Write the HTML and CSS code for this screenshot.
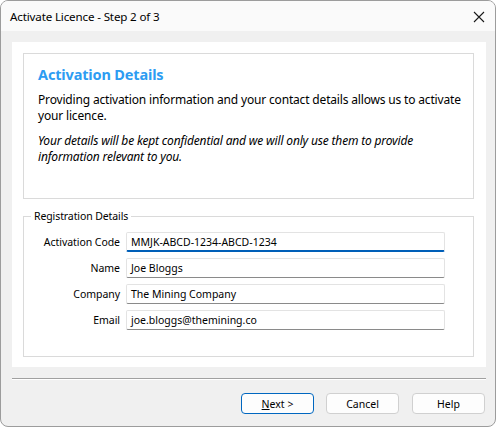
FILE: index.html
```html
<!DOCTYPE html>
<html>
<head>
<meta charset="utf-8">
<link rel="stylesheet" href="styles.css">
</head>
<body>
<div class="window">
  <div class="titlebar">
    <span class="title">Activate Licence - Step 2 of 3</span>
    <svg class="close" width="12" height="12" viewBox="0 0 12 12"><path d="M1 1 L11 11 M11 1 L1 11" stroke="#1a1a1a" stroke-width="1.1" fill="none"/></svg>
  </div>
  <div class="body">
    <div class="panel">
      <div class="intro">
        <h1 class="heading">Activation Details</h1>
        <p class="text">Providing activation information and your contact details allows us to activate your licence.</p>
        <p class="text italic">Your details will be kept confidential and we will only use them to provide information relevant to you.</p>
      </div>
      <fieldset class="group">
        <legend class="legend">Registration Details</legend>
        <div class="row">
          <label class="label">Activation Code</label>
          <div class="input focused">MMJK-ABCD-1234-ABCD-1234</div>
        </div>
        <div class="row">
          <label class="label">Name</label>
          <div class="input">Joe Bloggs</div>
        </div>
        <div class="row">
          <label class="label">Company</label>
          <div class="input">The Mining Company</div>
        </div>
        <div class="row row-last">
          <label class="label">Email</label>
          <div class="input">joe.bloggs@themining.co</div>
        </div>
      </fieldset>
    </div>
    <div class="separator"></div>
    <div class="buttons">
      <button class="btn default"><u>N</u>ext &gt;</button>
      <button class="btn">Cancel</button>
      <button class="btn btn-help">Help</button>
    </div>
  </div>
</div>
</body>
</html>
```

FILE: styles.css
```css
html, body {
  margin: 0;
  padding: 0;
  background: #ffffff;
}
body {
  font-family: "Noto Sans", "Open Sans", sans-serif;
  font-size: 12px;
  color: #000;
}
.window {
  width: 496px;
  height: 427px;
  box-sizing: border-box;
  border: 1px solid #9c9c9c;
  border-radius: 8px;
  overflow: hidden;
  background: #f0f0f0;
  display: flex;
  flex-direction: column;
}
.titlebar {
  height: 30px;
  background: #fafafa;
  display: flex;
  align-items: center;
  justify-content: space-between;
  padding: 0 9px 0 9px;
  flex-shrink: 0;
}
.title {
  font-size: 11.6px;
  color: #000;
  letter-spacing: -0.15px;
}
.close {
  margin-right: 1px;
  margin-top: 1px;
}
.body {
  display: flex;
  flex-direction: column;
  padding: 11px 9px 0 11px;
  flex: 1;
}
.panel {
  background: #fff;
  height: 325px;
  box-sizing: border-box;
  padding: 11px 12px 0 11px;
}
.intro {
  border: 1px solid #dadada;
  height: 146px;
  box-sizing: border-box;
  padding: 10px 8px 0 14px;
}
.heading {
  margin: 0;
  font-size: 14.5px;
  font-weight: bold;
  color: #2d9cf2;
  line-height: 20px;
  letter-spacing: -0.15px;
}
.text {
  margin: 8px 0 0 0;
  line-height: 16px;
  letter-spacing: -0.17px;
}
.text.italic {
  font-style: italic;
  margin-top: 9px;
  padding-right: 6px;
}
.group {
  margin: 10px 0 0 0;
  border: 1px solid #dadada;
  height: 148px;
  box-sizing: border-box;
  padding: 9px 28px 0 0;
  font-size: 10.5px;
}
.legend {
  padding: 0 3px;
  margin-left: 7px;
  letter-spacing: -0.1px;
  font-size: 10.5px;
}
.row {
  display: flex;
  align-items: center;
  height: 20px;
  margin-bottom: 6px;
}
.row-last {
  margin-top: 3px;
}
.label {
  width: 96px;
  text-align: right;
  padding-right: 6px;
  letter-spacing: -0.05px;
}
.input {
  flex: 1;
  height: 20px;
  box-sizing: border-box;
  border: 1px solid #e3e3e3;
  border-bottom: 1px solid #8a8a8a;
  border-radius: 2px;
  background: #fff;
  padding: 0 4px;
  line-height: 18px;
  letter-spacing: 0;
}
.input.focused {
  border-bottom: 2px solid #005fb8;
}
.separator {
  margin-top: 11px;
  height: 1px;
  background: #a0a0a0;
  border-bottom: 1px solid #ffffff;
}
.buttons {
  display: flex;
  justify-content: flex-end;
  gap: 12px;
  margin-top: 13px;
  padding-right: 1px;
}
.btn {
  width: 73px;
  height: 21px;
  box-sizing: border-box;
  border: 1px solid #d0d0d0;
  border-radius: 4px;
  background: #fdfdfd;
  font-family: "Noto Sans", "Open Sans", sans-serif;
  font-size: 10.5px;
  color: #000;
  padding: 0;
  letter-spacing: 0;
}
.btn-help {
  margin-left: 1px;
}
.btn.default {
  border-color: #0067c0;
}
```
